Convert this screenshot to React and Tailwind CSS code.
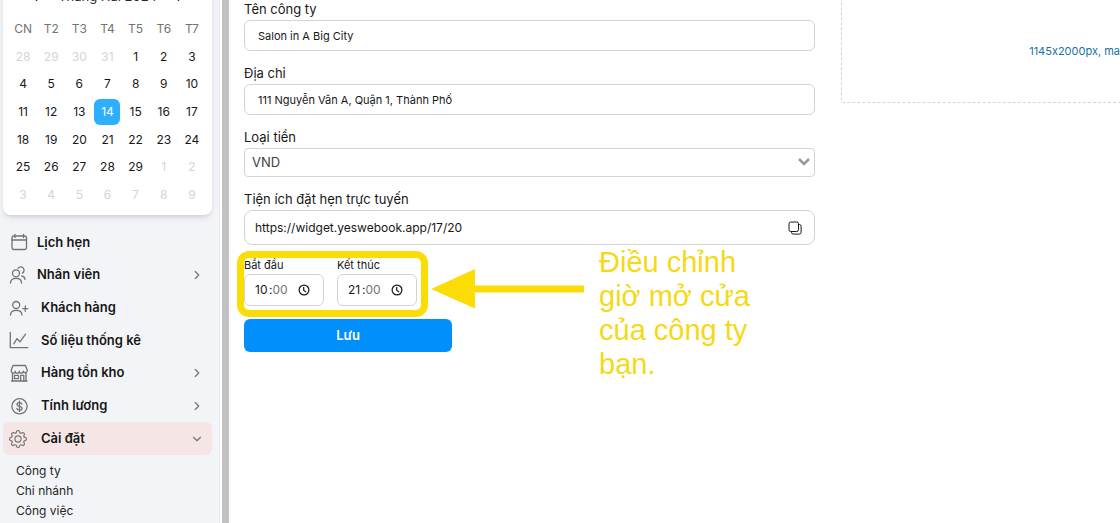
import { useState } from 'react'
import { ChevronDown, ChevronRight, ChevronLeft } from 'lucide-react'
import { BsGear } from 'react-icons/bs'

const WEEKDAYS = ['CN', 'T2', 'T3', 'T4', 'T5', 'T6', 'T7']

// February 2024, padded with the neighbouring months
const DAYS = [
  ...[28, 29, 30, 31].map((d) => ({ day: d, outside: true })),
  ...Array.from({ length: 29 }, (_, i) => ({ day: i + 1, outside: false })),
  ...Array.from({ length: 9 }, (_, i) => ({ day: i + 1, outside: true })),
]

function Icon({ children }) {
  return (
    <svg
      className="w-5 h-5 shrink-0"
      viewBox="0 0 20 20"
      fill="none"
      stroke="currentColor"
      strokeWidth="1.3"
      strokeLinecap="round"
      strokeLinejoin="round"
      aria-hidden="true"
    >
      {children}
    </svg>
  )
}

const CalendarIcon = () => (
  <Icon>
    <rect x="3" y="4" width="14.5" height="13.5" rx="1.8" />
    <path d="M3 8h14.5M6 2.5v3M14.5 2.5v3" />
  </Icon>
)

const StaffIcon = () => (
  <Icon>
    <circle cx="7" cy="8.3" r="3.5" />
    <path d="M1.5 18c0-3.2 2.2-4.6 5.5-4.6s5.5 1.4 5.5 4.6" />
    <path d="M9 3.2a3.4 3.4 0 1 1 4.3 5.1M12.6 10.8c2 .3 3.2 1.5 3.4 3.6" />
  </Icon>
)

const CustomerIcon = () => (
  <Icon>
    <circle cx="7.2" cy="7" r="3.5" />
    <path d="M1.5 17c0-3.2 2.3-4.6 5.7-4.6s5.7 1.4 5.7 4.6" />
    <path d="M16.3 8v5.2M13.7 10.6h5.2" />
  </Icon>
)

const ChartIcon = () => (
  <Icon>
    <path d="M1.3 2.5v15.2h17.5" />
    <path d="M4.8 13.8l3.2-5.2 2.9 3.2 5.7-7.6" />
  </Icon>
)

const ShopIcon = () => (
  <Icon>
    <path d="M4 2.5h12.5l1.7 4.5v1.2a2 2 0 0 1-3.9 0 2 2 0 0 1-4 0 2 2 0 0 1-4 0 2 2 0 0 1-4 0V7z" />
    <path d="M3.5 10.5v7.5M17 10.5v7.5M2.5 18h15.5" />
    <path d="M5.5 12.3h4v3.4h-4zM11.7 18v-5.7h3.1V18" />
  </Icon>
)

const DollarIcon = () => (
  <Icon>
    <circle cx="10.5" cy="10.3" r="7.6" />
    <path d="M13 8.2c-.2-1-1.2-1.6-2.5-1.6s-2.5.6-2.5 1.8c0 2.6 5.1 1.3 5.1 3.9 0 1.2-1.1 1.9-2.6 1.9s-2.5-.7-2.7-1.8M10.5 5.2v10.2" />
  </Icon>
)

const GearIcon = () => (
  <span className="w-5 shrink-0">
    <BsGear className="w-[18px] h-[18px]" aria-hidden="true" />
  </span>
)

const NAV = [
  { label: 'Lịch hẹn', icon: CalendarIcon, gap: 'gap-2' },
  { label: 'Nhân viên', icon: StaffIcon, gap: 'gap-2', more: true },
  { label: 'Khách hàng', icon: CustomerIcon, gap: 'gap-3' },
  { label: 'Số liệu thống kê', icon: ChartIcon, gap: 'gap-3' },
  { label: 'Hàng tồn kho', icon: ShopIcon, gap: 'gap-3', more: true },
  { label: 'Tính lương', icon: DollarIcon, gap: 'gap-3', more: true },
  { label: 'Cài đặt', icon: GearIcon, gap: 'gap-3', more: true, open: true },
]

const SUB_NAV = ['Công ty', 'Chi nhánh', 'Công việc']

function MiniCalendar() {
  const [selected, setSelected] = useState(14)

  return (
    <section className="-mt-[13px] rounded-lg bg-white px-1.5 pb-1.5 shadow-md">
      <div className="mb-2 flex h-5 items-center justify-center gap-4 text-[13px] text-gray-800">
        <button aria-label="Tháng trước">
          <ChevronLeft className="w-3.5 h-3.5" />
        </button>
        <span>Tháng Hai 2024</span>
        <button aria-label="Tháng sau">
          <ChevronRight className="w-3.5 h-3.5" />
        </button>
      </div>
      <div className="grid grid-cols-7 text-center text-xs text-neutral-500">
        {WEEKDAYS.map((d) => (
          <span key={d} className="leading-7">{d}</span>
        ))}
      </div>
      <div className="grid h-[166px] auto-rows-fr grid-cols-7 justify-items-center text-xs">
        {DAYS.map(({ day, outside }, i) => (
          <button
            key={i}
            onClick={() => !outside && setSelected(day)}
            className={`w-[26px] h-[26px] self-center rounded-md ${
              outside
                ? 'text-neutral-300'
                : day === selected
                  ? 'bg-[#2cb0fb] text-white'
                  : 'text-neutral-900'
            }`}
          >
            {day}
          </button>
        ))}
      </div>
    </section>
  )
}

function Sidebar() {
  return (
    <aside className="w-[220px] shrink-0 border-r border-gray-200 bg-[#f3f4f8] pl-[3px] pr-[7px]">
      <MiniCalendar />

      <nav className="mt-[11px]">
        <div className="grid h-[229px] auto-rows-fr">
          {NAV.map(({ label, icon: NavIcon, gap, more, open }) => (
            <a
              key={label}
              href="#"
              className={`flex items-center rounded-md pl-1.5 pr-2 text-neutral-500 ${gap} ${open ? 'bg-[#f5e6e5]' : ''}`}
            >
              <NavIcon />
              <span className="flex-1 text-[13px] font-semibold text-neutral-900">{label}</span>
              {more && (open ? <ChevronDown className="w-3.5 h-3.5" /> : <ChevronRight className="w-3.5 h-3.5" />)}
            </a>
          ))}
        </div>
        <ul className="mt-1.5 pl-[13px] text-xs leading-5 text-neutral-800">
          {SUB_NAV.map((item) => (
            <li key={item}>
              <a href="#">{item}</a>
            </li>
          ))}
        </ul>
      </nav>
    </aside>
  )
}

function Field({ id, label, children }) {
  return (
    <div className="mb-3">
      <label htmlFor={id} className="block text-[13px] leading-[21px]">{label}</label>
      {children}
    </div>
  )
}

function TimeField({ id, label, hour }) {
  return (
    <div>
      <label htmlFor={id} className="mb-px block text-[11px] leading-4">{label}</label>
      <div className="flex h-8 w-20 items-center rounded-md border border-neutral-300 pl-2.5 text-xs">
        <input id={id} defaultValue={hour} className="w-3.5 outline-none" />
        <span>:</span>
        <input aria-label={`${label} 00`} defaultValue="00" disabled className="w-4 text-neutral-500" />
        <button type="button" aria-label={label} className="ml-2.5">
          <svg className="w-3 h-3" viewBox="0 0 12 12" fill="none" stroke="currentColor" strokeWidth="1.2">
            <circle cx="6" cy="6" r="4.9" />
            <path d="M5.7 3v3.2l2.4 1.9" />
          </svg>
        </button>
      </div>
    </div>
  )
}

// Yellow frame, arrow and note drawn over the opening hours
function HoursCallout() {
  return (
    <>
      <div className="pointer-events-none absolute -top-1.5 -left-[7px] -right-[11px] -bottom-[11px] rounded-xl border-[7px] border-[#fbdc07]" />
      <div className="pointer-events-none absolute left-full -top-3 flex gap-[15px] pl-3.5 text-[#fbdc07]">
        <svg className="mt-6 h-10 w-[153px] shrink-0" viewBox="0 0 153 40" fill="currentColor">
          <path d="M0 20L44 0v16.5h109v7H44V39.5z" />
        </svg>
        <p className="w-40 font-['Liberation_Sans',sans-serif] text-[29px] leading-[34px] text-[#f5d916]">
          Điều chỉnh giờ mở cửa của công ty bạn.
        </p>
      </div>
    </>
  )
}

function CompanyForm() {
  return (
    <form className="-mt-px min-w-0 flex-1" onSubmit={(e) => e.preventDefault()}>
      <Field id="name" label="Tên công ty">
        <input
          id="name"
          defaultValue="Salon in A Big City"
          className="block h-[31px] w-full rounded-md border border-neutral-300 px-[13px] text-[11px]"
        />
      </Field>
      <Field id="address" label="Địa chỉ">
        <input
          id="address"
          defaultValue="111 Nguyễn Văn A, Quận 1, Thành Phố"
          className="block h-[31px] w-full rounded-md border border-neutral-300 px-[13px] text-[11px]"
        />
      </Field>
      <Field id="currency" label="Loại tiền">
        <div className="relative">
          <select
            id="currency"
            className="block h-[29px] w-full appearance-none rounded border border-neutral-300 bg-white px-[7px] text-[13px] text-neutral-700"
          >
            <option>VND</option>
          </select>
          <svg
            className="pointer-events-none absolute right-[5px] top-2.5 h-2 w-3"
            viewBox="0 0 12 8"
            fill="none"
            stroke="#999"
            strokeWidth="2.5"
          >
            <path d="M1 1l5 5 5-5" />
          </svg>
        </div>
      </Field>
      <Field id="widget" label="Tiện ích đặt hẹn trực tuyến">
        <div className="flex h-[35px] items-center rounded-lg border border-neutral-300 pl-2.5 pr-3">
          <input
            id="widget"
            readOnly
            defaultValue="https://widget.yeswebook.app/17/20"
            className="min-w-0 flex-1 text-xs outline-none"
          />
          <button type="button" aria-label="Sao chép">
            <svg className="w-3.5 h-3.5" viewBox="0 0 14 14" fill="none" stroke="currentColor">
              <rect x="1" y="1" width="9.5" height="9.5" rx="1.8" />
              <path d="M10.5 3.5h.8a1.8 1.8 0 0 1 1.8 1.8v6a1.8 1.8 0 0 1-1.8 1.8h-6a1.8 1.8 0 0 1-1.8-1.8v-.8" />
            </svg>
          </button>
        </div>
      </Field>

      <div className="relative mb-[13px] flex w-fit gap-[13px]">
        <TimeField id="start" label="Bắt đầu" hour="10" />
        <TimeField id="end" label="Kết thúc" hour="21" />
        <HoursCallout />
      </div>

      <button className="h-[33px] w-52 rounded-md bg-[#018ffb] text-[13px] font-semibold text-white">Lưu</button>
    </form>
  )
}

export default function App() {
  return (
    <div className="flex h-screen overflow-hidden bg-white font-[Inter,sans-serif] text-neutral-900 [font-feature-settings:'calt'_0]">
      <Sidebar />
      <div className="ml-0.5 mr-px w-[7px] shrink-0 bg-[#c1c1c1]" />
      <main className="flex min-w-0 flex-1 gap-[26px] border-l border-neutral-100 pl-[13px]">
        <CompanyForm />
        <div className="flex h-[103px] w-[279px] shrink-0 items-center justify-end overflow-hidden rounded-bl border-b border-l border-dashed border-neutral-300">
          <span className="whitespace-nowrap text-[11px] text-[#1672a3]">1145x2000px, ma</span>
        </div>
      </main>
    </div>
  )
}
